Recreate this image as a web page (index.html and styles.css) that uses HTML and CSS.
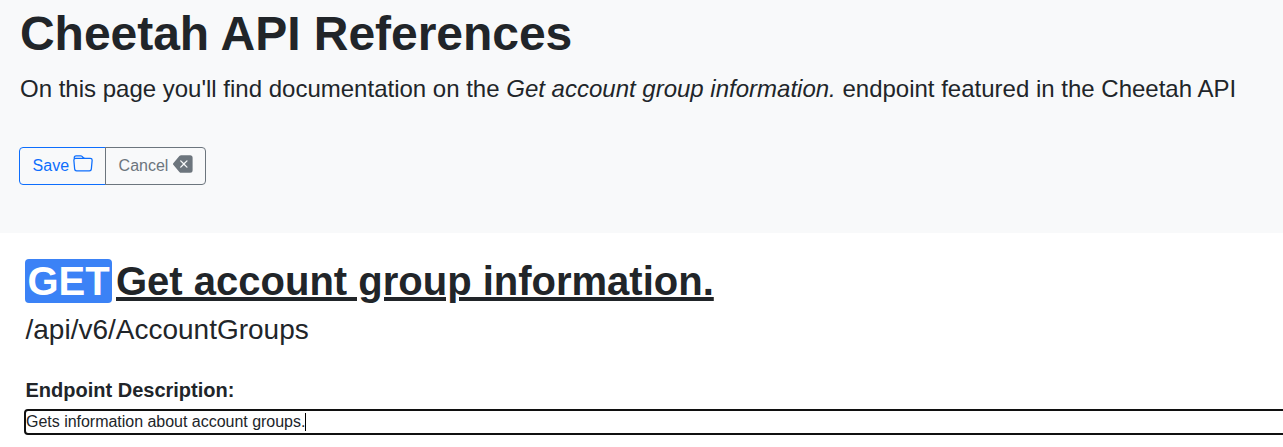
FILE: index.html
```html
<!DOCTYPE html>
<html lang="en">
<head>
<meta charset="utf-8">
<title>Cheetah API References</title>
<link rel="stylesheet" href="styles.css">
</head>
<body>
<header class="hero">
  <h1 class="title">Cheetah API References</h1>
  <p class="lead">On this page you'll find documentation on the <em>Get account group information.</em> endpoint featured in the Cheetah API</p>
  <div class="btn-group">
    <button class="btn btn-primary">Save <svg class="icon" viewBox="0 0 16 16" fill="currentColor"><path d="M.54 3.87.5 3a2 2 0 0 1 2-2h3.672a2 2 0 0 1 1.414.586l.828.828A2 2 0 0 0 9.828 3h3.982a2 2 0 0 1 1.992 2.181l-.637 7A2 2 0 0 1 13.174 14H2.826a2 2 0 0 1-1.991-1.819l-.637-7a1.99 1.99 0 0 1 .342-1.31zM2.19 4a1 1 0 0 0-.996 1.09l.637 7a1 1 0 0 0 .995.91h10.348a1 1 0 0 0 .995-.91l.637-7A1 1 0 0 0 13.81 4H2.19zm4.69-1.707A1 1 0 0 0 6.172 2H2.5a1 1 0 0 0-1 .981l.006.139C1.72 3.042 1.95 3 2.19 3h5.396l-.707-.707z"/></svg></button>
    <button class="btn btn-secondary">Cancel <svg class="icon" viewBox="0 0 16 16" fill="currentColor"><path d="M15.683 3a2 2 0 0 0-2-2h-7.08a2 2 0 0 0-1.519.698L.241 7.35a1 1 0 0 0 0 1.302l4.843 5.65A2 2 0 0 0 6.603 15h7.08a2 2 0 0 0 2-2V3zM5.829 5.854a.5.5 0 1 1 .707-.708l2.147 2.147 2.146-2.147a.5.5 0 1 1 .707.708L9.39 8l2.146 2.146a.5.5 0 0 1-.707.708L8.683 8.707l-2.147 2.147a.5.5 0 0 1-.707-.708L7.976 8 5.829 5.854z"/></svg></button>
  </div>
</header>
<main class="endpoint">
  <h2 class="endpoint-title"><span class="method">GET</span><span class="name">Get account group information.</span></h2>
  <p class="path">/api/v6/AccountGroups</p>
  <h3 class="label">Endpoint Description:</h3>
  <div class="editor">Gets information about account groups.<span class="caret"></span></div>
</main>
</body>
</html>
```
FILE: styles.css
```css
* { box-sizing: border-box; }
body { margin: 0; height: 447px; overflow: hidden; background: #fff; color: #212529; font-family: "Liberation Sans", Arial, sans-serif; }
h1, h2, h3, p { margin: 0; }
.hero { height: 233px; padding: 5px 20px 0; background: #f8f9fa; }
.title { font-size: 48px; line-height: 58px; letter-spacing: -.04px; white-space: nowrap; }
.lead { margin-top: 8px; font-size: 24px; line-height: 36px; white-space: nowrap; }
.btn-group { display: flex; margin: 40px 0 0 -1px; }
.btn { display: flex; align-items: center; justify-content: flex-start; gap: 4px; height: 38px; padding: 0 0 0 12.6px; border: 1px solid; background: transparent; font: 16px/24px "Liberation Sans", Arial, sans-serif; }
.btn-primary { width: 87px; color: #0d6efd; border-radius: 4px 0 0 4px; }
.btn-secondary { gap: 5px; width: 101px; color: #6c757d; margin-left: -1px; border-radius: 0 4px 4px 0; }
.icon { flex: none; width: 20px; height: 20px; margin-top: -5px; }
.endpoint { padding: 26px 0 0 25px; }
.endpoint-title { display: flex; gap: 4px; font-size: 40px; line-height: 44px; white-space: nowrap; }
.method { width: 87px; padding-left: 2.5px; border-radius: 4px; background: #3b82f6; color: #fff; }
.name { text-decoration: underline; text-decoration-thickness: 4px; text-underline-offset: 2px; }
.path { margin: 10px 0 0 .5px; font-size: 28px; line-height: 34px; }
.label { margin: 31px 0 0 .5px; font-size: 20px; line-height: 24px; }
.editor { display: flex; align-items: center; width: 1300px; height: 26px; margin: 7px 0 0 -1px; border: 2px solid #101010; border-radius: 4px; font-size: 16px; letter-spacing: -.02px; white-space: nowrap; }
.caret { width: 1px; height: 18px; background: #000; }
```
